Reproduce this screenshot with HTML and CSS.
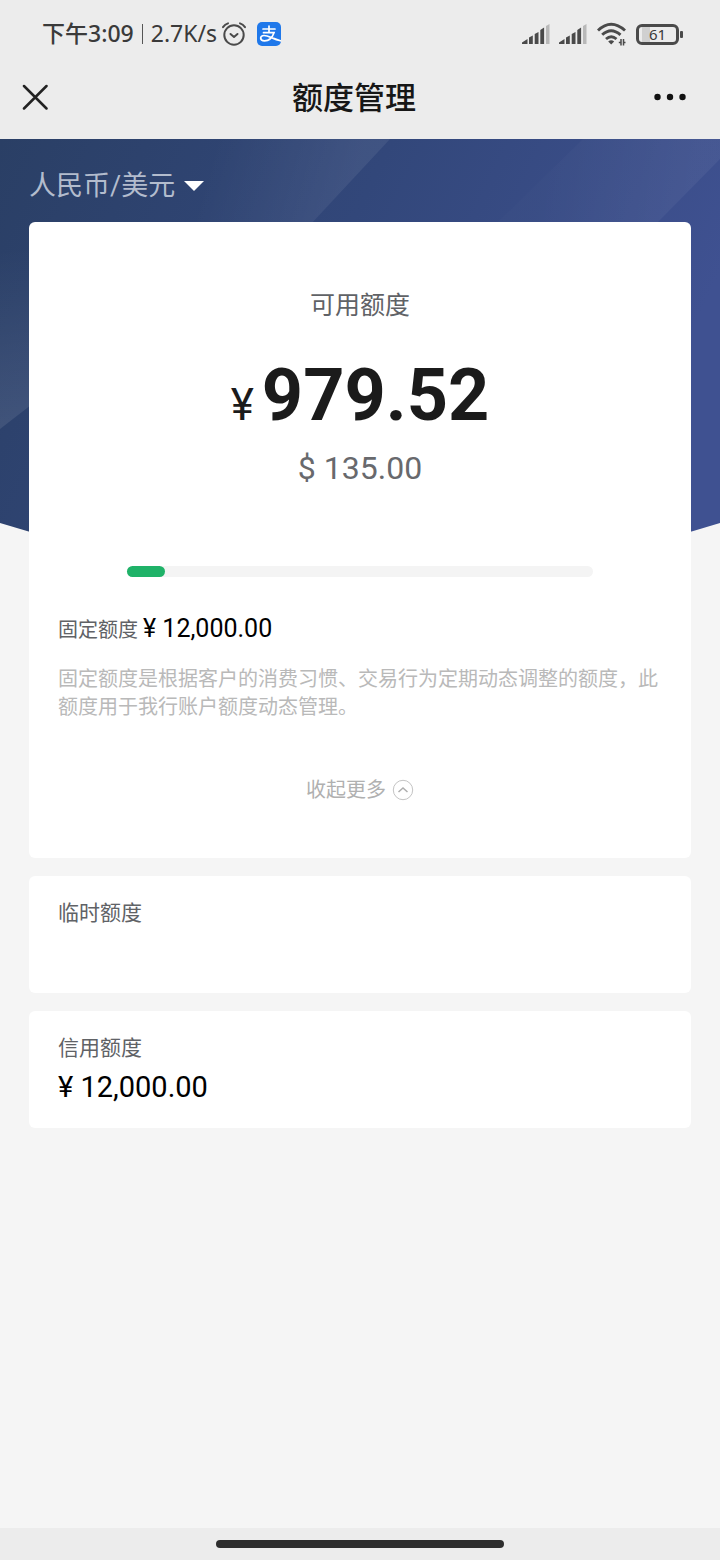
FILE: index.html
```html
<!DOCTYPE html>
<html lang="zh-CN">
<head>
<meta charset="utf-8">
<meta name="viewport" content="width=device-width, initial-scale=1">
<title>额度管理</title>
<link rel="stylesheet" href="styles.css">
</head>
<body>
<div class="app">
  <header class="top">
    <div class="status">
      <div class="status-left">
        <span class="clock">下午3:09</span>
        <span class="divider"></span>
        <span class="speed">2.7K/s</span>
        <svg class="alarm" width="26" height="26" viewBox="0 0 26 26" fill="none" stroke="#4a4a4a" stroke-width="2" stroke-linecap="round" stroke-linejoin="round" aria-hidden="true">
          <circle cx="13" cy="14" r="9.7"/><path d="M9.5 13l3.500 3 3.500-3M2 6.200Q4 3.400 7 2.400M24 6.200Q22 3.400 19 2.400"/>
        </svg>
        <svg class="pay" width="24" height="24" viewBox="0 0 24 24" fill="none" stroke="#fff" stroke-width="1.700" stroke-linecap="round" aria-hidden="true">
          <rect width="24" height="24" rx="5" fill="#1f78ea" stroke="none"/>
          <path d="M6 7h12M12 4v6.500M6.500 10.700h10.500C15.500 15 12 18.800 7.500 18.800c-5 0-5-5.300-.5-5.300 4.500 0 8 3 16.500 5.300"/>
        </svg>
      </div>
      <div class="status-right">
        <svg width="28" height="21" viewBox="0 0 28 21" aria-hidden="true"><path fill="#4a4a4a" d="M0 20v-1.500L5.500 15v5zM7 13.500l3.800-2V20H7zM12.700 10l3.800-2v12h-3.800zM18.300 6l3.800-2.500V20h-3.800z"/><path fill="#b8b8b8" d="M24 2l3.500-2v20H24z"/></svg>
        <svg class="signal" width="28" height="21" viewBox="0 0 28 21" aria-hidden="true"><path fill="#4a4a4a" d="M0 20v-1.500L5.500 15v5zM7 13.500l3.800-2V20H7zM12.700 10l3.800-2v12h-3.800zM18.300 6l3.800-2.500V20h-3.800z"/><path fill="#b8b8b8" d="M24 2l3.500-2v20H24z"/></svg>
        <svg class="wifi" width="29" height="24" viewBox="0 0 29 24" fill="none" stroke="#4a4a4a" stroke-width="2.900" aria-hidden="true">
          <path d="M1 8.500Q14 -4 28 8.500M5.200 12.800Q14 4.500 23.500 12.800M9 17Q14.200 12.500 19.500 17"/><path d="M14.200 22.500l-3-3q3-2.500 6 0z" fill="#4a4a4a" stroke="none"/><path d="M24 17v6.500M21.800 20.500H24M26.500 23.500V17M26.500 20.500h2" stroke-width="1.500"/>
        </svg>
        <span class="battery"><span class="level">61</span><span class="cap"></span></span>
      </div>
    </div>
    <nav class="nav">
      <button class="icon-btn" aria-label="关闭"><svg width="26" height="26" viewBox="0 0 26 26" fill="none" stroke="#222" stroke-width="2.500" stroke-linecap="round"><path d="M2 2l22.500 22.500M24.500 2L2 24.500"/></svg></button>
      <h1 class="title">额度管理</h1>
      <button class="icon-btn more" aria-label="更多"><svg width="32" height="8" viewBox="0 0 32 8" fill="#111"><circle cx="3.500" cy="4" r="3.200"/><circle cx="16" cy="4" r="3.200"/><circle cx="28.500" cy="4" r="3.200"/></svg></button>
    </nav>
  </header>

  <main class="page">
    <svg class="hero" viewBox="0 0 720 450" preserveAspectRatio="none" aria-hidden="true">
      <defs>
        <linearGradient id="base" x1="0" y1="0" x2="1" y2="0.300"><stop offset="0" stop-color="#2a3f65"/><stop offset="0.500" stop-color="#32477a"/><stop offset="1" stop-color="#3f5191"/></linearGradient>
        <linearGradient id="mid" gradientUnits="userSpaceOnUse" x1="215" y1="0" x2="355" y2="40"><stop offset="0" stop-color="#fff" stop-opacity="0"/><stop offset="1" stop-color="#fff" stop-opacity="0.070"/></linearGradient>
        <linearGradient id="right" gradientUnits="userSpaceOnUse" x1="540" y1="40" x2="690" y2="60"><stop offset="0" stop-color="#fff" stop-opacity="0.010"/><stop offset="1" stop-color="#fff" stop-opacity="0.050"/></linearGradient>
        <linearGradient id="left" gradientUnits="userSpaceOnUse" x1="0" y1="110" x2="20" y2="280"><stop offset="0" stop-color="#fff" stop-opacity="0"/><stop offset="1" stop-color="#fff" stop-opacity="0.090"/></linearGradient>
        <clipPath id="curve"><path d="M0 0h720v384Q360 496 0 384z"/></clipPath>
      </defs>
      <g clip-path="url(#curve)">
        <path fill="url(#base)" d="M0 0h720v450H0z"/>
        <path fill="url(#mid)" d="M180 0h210L310 86H180z"/>
        <path fill="url(#right)" d="M583 0h137v20L655 86H495z"/>
        <path fill="url(#left)" d="M0 90h40v169L0 290z"/>
      </g>
    </svg>
    <div class="content">
      <label class="currency">
        <select class="currency-select" aria-label="币种"><option>人民币/美元</option></select>
        <svg width="20" height="10" viewBox="0 0 20 10" fill="#fff" aria-hidden="true"><path d="M0 0h20L10 10z"/></svg>
      </label>

      <section class="card main-card">
        <h2 class="caption">可用额度</h2>
        <p class="amount"><span class="yen">¥</span><strong class="figure">979.52</strong></p>
        <p class="usd">$ 135.00</p>
        <div class="bar" role="progressbar" aria-label="可用额度" aria-valuenow="8" aria-valuemin="0" aria-valuemax="100"><div class="fill" style="width:8%"></div></div>
        <p class="fixed"><span class="fixed-label">固定额度</span><span class="fixed-value">¥ 12,000.00</span></p>
        <p class="note">固定额度是根据客户的消费习惯、交易行为定期动态调整的额度，此额度用于我行账户额度动态管理。</p>
        <button class="collapse">收起更多<svg width="22" height="22" viewBox="0 0 22 22" fill="none" stroke="#c4c4c4" aria-hidden="true"><circle cx="11" cy="11" r="9.700"/><path stroke="#adadad" stroke-width="1.500" d="M6.500 13l4.500-4 4.500 4"/></svg></button>
      </section>

      <section class="card row-card"><h2 class="row-title">临时额度</h2></section>
      <section class="card row-card"><h2 class="row-title">信用额度</h2><p class="row-value">¥ 12,000.00</p></section>
    </div>
  </main>
  <footer class="home"><div class="home-bar"></div></footer>
</div>
</body>
</html>
```

FILE: styles.css
```css
* { box-sizing: border-box; }
body, h1, h2, p { margin: 0; font-weight: 400; }
body {
  background: #f5f5f5;
  color: #000;
  font-family: Roboto, "Noto Sans CJK SC", sans-serif;
}
button, select { border: 0; padding: 0; background: none; font: inherit; color: inherit; }
svg { display: block; flex: none; }

.app { min-height: 100vh; display: flex; flex-direction: column; }

.top { background: #ececec; }
.status {
  display: flex;
  justify-content: space-between;
  align-items: center;
  height: 68px;
  padding: 0 37px 0 42px;
  color: #3a3a3a;
  font-family: "Noto Sans", "Noto Sans CJK SC", sans-serif;
}
.status-left, .status-right { display: flex; align-items: center; }
.clock { font-size: 23px; line-height: 32px; padding-bottom: 2px; font-weight: 500; }
.divider { width: 1px; height: 20px; margin: 0 8px; background: #555; }
.speed { font-size: 23px; line-height: 32px; padding-bottom: 2px; }
.alarm { margin-left: 4px; }
.pay { margin-left: 10px; }
.signal { margin-left: 9px; }
.wifi { margin: 0 10px; }
.battery { display: flex; align-items: center; gap: 1px; }
.level {
  width: 43px;
  height: 21px;
  border: 3px solid #4a4a4a;
  border-radius: 6px;
  background: linear-gradient(90deg, #ececec 3px, #d0d0d0 3px, #d0d0d0 11px, #ececec 11px);
  font-size: 15px;
  line-height: 15px;
  text-align: center;
}
.cap { width: 3px; height: 7px; border-radius: 1px; background: #4a4a4a; }

.nav {
  display: grid;
  grid-template-columns: 1fr auto 1fr;
  align-items: center;
  height: 71px;
  padding: 0 34px 14px 22px;
}
.icon-btn { justify-self: start; }
.icon-btn.more { justify-self: end; }
.title { padding-top: 4px; font-size: 31px; line-height: 40px; font-weight: 500; color: #171717; }

.page { position: relative; flex: 1; }
.hero { position: absolute; top: 0; left: 0; width: 100%; height: 450px; }
.content { position: relative; padding: 0 29px 40px; }

.currency { display: flex; align-items: center; gap: 8px; height: 83px; padding-top: 11px; }
.currency-select {
  appearance: none;
  color: #b3bccd;
  font-size: 27px;
  line-height: 40px;
}

.card { background: #fff; border-radius: 6px; margin-bottom: 18px; padding: 0 29px; }
.main-card { display: flex; flex-direction: column; padding-top: 66px; padding-bottom: 52px; }
.caption { font-size: 25px; line-height: 36px; text-align: center; color: #606266; }
.amount { display: flex; justify-content: center; align-items: baseline; gap: 8px; margin-top: 30px; line-height: 84px; color: #1b1b1b; }
.yen { font-size: 44px; }
.figure { font-size: 72px; font-weight: 700; }
.usd { margin-top: 1px; font-size: 32px; line-height: 40px; text-align: center; color: #68696d; }
.bar { width: 77%; height: 11px; margin: 78px auto 0; border-radius: 6px; background: #f4f4f4; }
.fill { height: 100%; border-radius: 6px; background: #1fb268; }
.fixed { display: flex; align-items: baseline; gap: 5px; margin-top: 34px; line-height: 36px; }
.fixed-label { font-size: 20px; color: #606266; }
.fixed-value { font-size: 25px; }
.note { margin-top: 17px; font-size: 20px; line-height: 28px; color: #b9b9b9; }
.collapse { display: flex; align-items: center; align-self: center; gap: 6px; margin-top: 53px; font-size: 20px; line-height: 32px; color: #b0b0b0; }

.row-card { min-height: 117px; padding-top: 20px; }
.row-title { font-size: 21px; line-height: 34px; color: #606266; }
.row-value { margin-top: 4px; font-size: 29px; line-height: 36px; }

.home { display: flex; justify-content: center; align-items: center; height: 32px; background: #ececec; }
.home-bar { width: 40%; height: 8px; border-radius: 4px; background: #2e2e2e; }
```
